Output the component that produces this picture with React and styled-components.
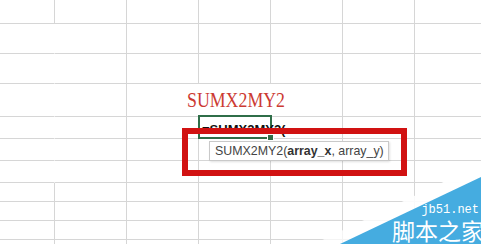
import React from 'react'
import styled, { createGlobalStyle } from 'styled-components'

const GlobalStyle = createGlobalStyle`
  html, body {
    margin: 0;
    padding: 0;
    background: #ffffff;
  }
`

const Sheet = styled.div`
  position: relative;
  width: 481px;
  height: 244px;
  overflow: hidden;
  background: #ffffff;
  font-family: "Liberation Sans", Arial, sans-serif;
`

const Grid = styled.div`
  display: grid;
  grid-template-columns: 55px 72px 72px 72px 72px 72px 72px;
  grid-template-rows: ${(p) => p.$rows};
  width: 487px;
`

const Cell = styled.div`
  box-sizing: border-box;
  border-bottom: 1px solid #d6d6d6;
  border-right: 1px solid ${(p) => (p.$noRight ? 'transparent' : '#d6d6d6')};
  grid-row: ${(p) => p.$row};
  grid-column: ${(p) => p.$col};
`

// the selected cell sits in its grid slot, drawn over the cell borders
const ActiveCell = styled.div`
  position: relative;
  z-index: 1;
  grid-row: ${(p) => p.$row};
  grid-column: ${(p) => p.$col};
  align-self: start;
  justify-self: start;
  width: 74px;
  height: 24px;
  margin: -2px 0 0 -1px;
  box-sizing: border-box;
  border: 2px solid #2f6e48;
`

const CellText = styled.span`
  position: absolute;
  left: 2px;
  top: 3px;
  line-height: 20px;
  font-size: 13px;
  font-weight: bold;
  color: #111111;
  white-space: nowrap;
`

const FillHandle = styled.span`
  position: absolute;
  right: -4px;
  bottom: -4px;
  width: 5px;
  height: 5px;
  background: #2f6e48;
  border: 1px solid #ffffff;
`

const Note = styled.div`
  position: absolute;
  z-index: 2;
  left: 182px;
  top: 84px;
  width: 110px;
  height: 31px;
  background: #ffffff;
`

const NoteText = styled.span`
  display: inline-block;
  padding-left: 5px;
  color: #cc3a32;
  font-family: "Liberation Serif", "Times New Roman", serif;
  font-size: 22px;
  line-height: 31px;
  white-space: nowrap;
  transform: scaleX(0.81);
  transform-origin: 5px 0;
`

const Tip = styled.div`
  position: absolute;
  z-index: 2;
  left: 209px;
  top: 141px;
  width: 180px;
  height: 20px;
  box-sizing: border-box;
  padding-left: 5px;
  background: #ffffff;
  border: 1px solid #c9c9c9;
  box-shadow: 1px 1px 2px rgba(0, 0, 0, 0.12);
  color: #444444;
  font-size: 12.4px;
  line-height: 18px;
  white-space: nowrap;
`

const Arg = styled.b`
  font-weight: bold;
  color: #333333;
`

const Highlight = styled.div`
  position: absolute;
  z-index: 3;
  left: 182px;
  top: 128px;
  width: 225px;
  height: 48px;
  box-sizing: border-box;
  border: 6px solid #d11212;
`

const Watermark = styled.div`
  position: absolute;
  z-index: 4;
  right: 0;
  bottom: 0;
  width: 181px;
  height: 94px;
`

const MarkShape = styled.svg`
  position: absolute;
  inset: 0;
`

const MarkText = styled.div`
  position: absolute;
  right: 0;
  bottom: 0;
  display: flex;
  flex-direction: column;
  align-items: flex-end;
  color: #ffffff;
  white-space: nowrap;
`

const MarkDomain = styled.span`
  margin-right: 2px;
  font-family: "Liberation Mono", "DejaVu Sans Mono", monospace;
  font-size: 12px;
  line-height: 13px;
`

const MarkName = styled.span`
  margin-right: -3px;
  font-family: "Noto Sans CJK SC", sans-serif;
  font-size: 23px;
  line-height: 27px;
`

const rowHeights = [24, 30, 30, 33, 22, 22, 22, 19, 19, 19, 19]

export default function App() {
  const cells = []
  rowHeights.forEach((h, r) => {
    for (let c = 0; c < 7; c++) {
      cells.push(
        <Cell key={`${r}-${c}`} $row={r + 1} $col={c + 1} $noRight={c === 0 && r >= 1 && r <= 6} />
      )
    }
  })

  return (
    <>
      <GlobalStyle />
      <Sheet>
        <Grid $rows={rowHeights.map((h) => `${h}px`).join(' ')}>
          {cells}
          <ActiveCell $row={5} $col={4}>
            <CellText>=SUMX2MY2(</CellText>
            <FillHandle />
          </ActiveCell>
        </Grid>
        <Note>
          <NoteText>SUMX2MY2</NoteText>
        </Note>
        <Tip>
          SUMX2MY2(<Arg>array_x</Arg>, array_y)
        </Tip>
        <Highlight />
        <Watermark>
          <MarkShape width="181" height="94" viewBox="0 0 181 94">
            <defs>
              <linearGradient id="fade" x1="0" y1="1" x2="0.4" y2="0">
                <stop offset="0" stopColor="#ffffff" stopOpacity="0.7" />
                <stop offset="1" stopColor="#ffffff" stopOpacity="1" />
              </linearGradient>
            </defs>
            <polygon points="14,94 181,14 181,94" fill="url(#fade)" />
            <polygon points="40,94 181,27 181,94" fill="#45ace0" />
          </MarkShape>
          <MarkText>
            <MarkDomain>jb51.net</MarkDomain>
            <MarkName>脚本之家</MarkName>
          </MarkText>
        </Watermark>
      </Sheet>
    </>
  )
}
